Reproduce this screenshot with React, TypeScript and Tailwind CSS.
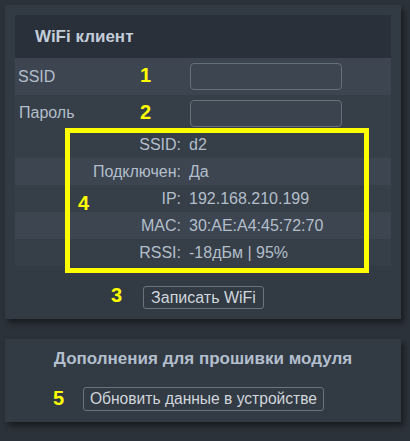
const font = { fontFamily: '"Liberation Sans", Arial, sans-serif' };

const info = [
    { label: 'SSID:', value: 'd2', light: false },
    { label: 'Подключен:', value: 'Да', light: true },
    { label: 'IP:', value: '192.168.210.199', light: false },
    { label: 'MAC:', value: '30:AE:A4:45:72:70', light: true },
    { label: 'RSSI:', value: '-18дБм | 95%', light: false },
];

const Mark = ({ n, cls }: { n: string; cls: string }) => (
    <div className={`absolute text-[20px] font-bold leading-none text-[#ffff00] ${cls}`}>{n}</div>
);

const App = () => {
    return (
        <div
            className="relative min-h-[441px] w-[410px] bg-[#2b323a] pl-[5px] pt-[5px] text-[16px] text-[#b3becb]"
            style={font}
        >
            <section className="w-[396px] bg-[#323a43] p-[10px] shadow-[3px_4px_6px_rgba(0,0,0,0.45)]">
                <div className="flex h-[43px] items-center bg-[#29303a] pl-[20px] text-[17px] font-bold text-[#c3cdd9]">
                    WiFi клиент
                </div>
                <div className="flex h-[37px] items-center bg-[#3c4550]">
                    <span className="w-[175px] pl-[3px]">SSID</span>
                    <input className="h-[27px] w-[152px] rounded-[4px] border border-[#66707b] bg-[#3c4550] outline-none" />
                </div>
                <div className="flex h-[36px] items-center bg-[#363e48]">
                    <span className="w-[175px] pl-[4px]">Пароль</span>
                    <input
                        type="password"
                        className="h-[27px] w-[152px] rounded-[4px] border border-[#66707b] bg-[#3b444e] outline-none"
                    />
                </div>
                {info.map((r) => (
                    <div
                        key={r.label}
                        className={`flex h-[27px] items-center ${r.light ? 'bg-[#3c4550]' : 'bg-[#363e48]'}`}
                    >
                        <span className="w-[166px] text-right">{r.label}</span>
                        <span className="pl-[8px]">{r.value}</span>
                    </div>
                ))}
                <div className="mt-[20px] flex justify-center pl-[1px]">
                    <button className="h-[23px] rounded-[3px] border border-[#6a747f] px-[7px] leading-none text-[#d0d6dc]">
                        Записать WiFi
                    </button>
                </div>
            </section>

            <section className="mt-[20px] w-[396px] bg-[#323a43] px-[10px] pb-[11px] pt-[10px] shadow-[3px_4px_6px_rgba(0,0,0,0.45)]">
                <div className="h-[20px] text-center text-[17px] font-bold leading-[20px] text-[#b3bfcd]">
                    Дополнения для прошивки модуля
                </div>
                <div className="mt-[18px] flex justify-center pl-[1px]">
                    <button className="h-[24px] rounded-[3px] border border-[#6a747f] px-[6px] text-[15.6px] leading-none text-[#d0d6dc]">
                        Обновить данные в устройстве
                    </button>
                </div>
            </section>

            <div className="absolute left-[65px] top-[128px] h-[145px] w-[304px] border-[5px] border-[#ffff00]" />
            <Mark n="1" cls="left-[140px] top-[65px]" />
            <Mark n="2" cls="left-[140px] top-[102px]" />
            <Mark n="4" cls="left-[78px] top-[193px]" />
            <Mark n="3" cls="left-[111px] top-[285px]" />
            <Mark n="5" cls="left-[53px] top-[388px]" />
        </div>
    );
};

export default App;
